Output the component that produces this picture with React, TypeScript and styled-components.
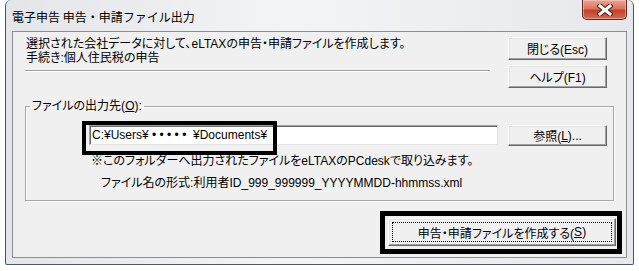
import React from 'react'
import styled, { createGlobalStyle } from 'styled-components'

const GlobalStyle = createGlobalStyle`
  html, body {
    margin: 0;
    background: #fff;
  }
  body {
    font-family: 'Liberation Sans', 'Noto Sans CJK JP', sans-serif;
    font-size: 12px;
    font-feature-settings: 'palt';
    color: #000;
  }
`

const Window = styled.div`
  box-sizing: border-box;
  margin-left: 5px;
  width: 629px;
  height: 265px;
  display: flex;
  flex-direction: column;
  padding: 0 6px 6px;
  border: 1px solid #4f555c;
  border-top: none;
  border-radius: 6px 6px 2px 2px;
  background: linear-gradient(90deg, #e3e5e8 0%, #f3f4f6 45%, #e6e8eb 100%);
`

const TitleBar = styled.div`
  height: 31px;
  flex: none;
  display: flex;
  align-items: flex-start;
  justify-content: space-between;
`

const Title = styled.div`
  padding-top: 9px;
  font-family: 'Noto Sans CJK JP', sans-serif;
  font-feature-settings: normal;
  font-size: 12px;
  line-height: 16px;
  color: #000;
`

const CloseButton = styled.div`
  box-sizing: border-box;
  width: 45px;
  height: 20px;
  display: flex;
  align-items: center;
  justify-content: center;
  border: 1px solid #5e2a20;
  border-top: none;
  border-radius: 0 0 5px 5px;
  background: linear-gradient(#e9a594 0%, #d9735d 45%, #c2412a 55%, #d36a50 100%);
  box-shadow: inset 0 0 0 1px rgba(255, 210, 200, 0.5);
`

const Client = styled.div`
  box-sizing: border-box;
  flex: 1;
  display: flex;
  flex-direction: column;
  background: #f0f0f0;
  border: 1px solid #8a8d92;
`

const TopSection = styled.div`
  display: flex;
  gap: 18px;
  padding: 5px 19px 0 12px;
`

const InfoColumn = styled.div`
  width: 465px;
`

const MessageLine = styled.div`
  padding-left: 1px;
  line-height: 14px;
  white-space: nowrap;
`

const Separator = styled.div`
  margin-top: 5px;
  border-top: 1px solid #a0a0a0;
  border-bottom: 1px solid #fff;
`

const ButtonColumn = styled.div`
  display: flex;
  flex-direction: column;
  gap: 5px;
`

const PushButton = styled.div<{ $width: number; $height: number }>`
  position: relative;
  box-sizing: border-box;
  width: ${({ $width }) => $width}px;
  height: ${({ $height }) => $height}px;
  display: flex;
  align-items: center;
  justify-content: center;
  background: #f0f0f0;
  border: 1px solid;
  border-color: #fff #696969 #696969 #fff;
  box-shadow: inset -1px -1px 0 #a0a0a0, inset 1px 1px 0 #e3e3e3;
  white-space: nowrap;
`

const FocusRing = styled.div`
  position: absolute;
  inset: 3px;
  border: 1px dotted #000;
`

const GroupBox = styled.fieldset`
  margin: 11px 12px 0 12px;
  padding: 0 0 10px;
  border: 1px solid #a6a6a6;
  box-shadow: 1px 1px 0 #fff, inset 1px 1px 0 #fff;
`

const GroupLegend = styled.legend`
  margin-left: 4px;
  padding: 0 2px;
  line-height: 14px;
`

const InputRow = styled.div`
  display: flex;
  align-items: flex-start;
  gap: 10px;
  margin-top: 12px;
  padding-left: 63px;
`

const InputWrap = styled.div`
  position: relative;
`

const PathInput = styled.input`
  box-sizing: border-box;
  width: 409px;
  height: 20px;
  margin: 0;
  padding: 0 2px;
  font-family: inherit;
  font-size: 12px;
  color: #000;
  background: #fff;
  border: 1px solid;
  border-color: #a0a0a0 #e3e3e3 #e3e3e3 #a0a0a0;
  box-shadow: inset 1px 1px 0 #696969;
  outline: none;
`

const NoteLine = styled.div<{ $indent: number; $gap: number }>`
  margin-top: ${({ $gap }) => $gap}px;
  padding-left: ${({ $indent }) => $indent}px;
  line-height: 14px;
  white-space: nowrap;
`

const BottomRow = styled.div`
  display: flex;
  justify-content: flex-end;
  margin-top: 17px;
  padding-right: 10px;
`

const ButtonWrap = styled.div`
  position: relative;
`

const Highlight = styled.div<{ $t: number; $r: number; $b: number; $l: number; $w: number }>`
  position: absolute;
  top: ${({ $t }) => $t}px;
  right: ${({ $r }) => $r}px;
  bottom: ${({ $b }) => $b}px;
  left: ${({ $l }) => $l}px;
  border: ${({ $w }) => $w}px solid #000;
  pointer-events: none;
`

const CloseGlyph = () => (
  <svg width="16" height="12" viewBox="0 0 16 12">
    <path d="M3 2 L13 10 M13 2 L3 10" stroke="#4a1d14" strokeWidth="5" strokeLinecap="square" />
    <path d="M3 2 L13 10 M13 2 L3 10" stroke="#fff" strokeWidth="3" strokeLinecap="square" />
  </svg>
)

export default function App() {
  return (
    <>
      <GlobalStyle />
      <Window>
        <TitleBar>
          <Title>電子申告 申告・申請ファイル出力</Title>
          <CloseButton>
            <CloseGlyph />
          </CloseButton>
        </TitleBar>
        <Client>
          <TopSection>
            <InfoColumn>
              <MessageLine>選択された会社データに対して、eLTAXの申告・申請ファイルを作成します。</MessageLine>
              <MessageLine>手続き:個人住民税の申告</MessageLine>
              <Separator />
            </InfoColumn>
            <ButtonColumn>
              <PushButton $width={99} $height={23}>閉じる(Esc)</PushButton>
              <PushButton $width={99} $height={23}>ヘルプ(F1)</PushButton>
            </ButtonColumn>
          </TopSection>

          <GroupBox>
            <GroupLegend>
              ファイルの出力先(<u>O</u>):
            </GroupLegend>
            <InputRow>
              <InputWrap>
                <PathInput readOnly value="C:¥Users¥ • • • • •  ¥Documents¥" />
                <Highlight $t={-4} $r={221} $b={-10} $l={-7} $w={4} />
              </InputWrap>
              <PushButton $width={99} $height={21}>
                参照(<u>L</u>)...
              </PushButton>
            </InputRow>
            <NoteLine $indent={65} $gap={8}>
              ※このフォルダーへ出力されたファイルをeLTAXのPCdeskで取り込みます。
            </NoteLine>
            <NoteLine $indent={75} $gap={8}>
              ファイル名の形式:利用者ID_999_999999_YYYYMMDD-hhmmss.xml
            </NoteLine>
          </GroupBox>

          <BottomRow>
            <ButtonWrap>
              <PushButton $width={228} $height={28}>
                <FocusRing />
                申告・申請ファイルを作成する(<u>S</u>)
              </PushButton>
              <Highlight $t={-7} $r={-6} $b={-8} $l={-8} $w={5} />
            </ButtonWrap>
          </BottomRow>
        </Client>
      </Window>
    </>
  )
}
